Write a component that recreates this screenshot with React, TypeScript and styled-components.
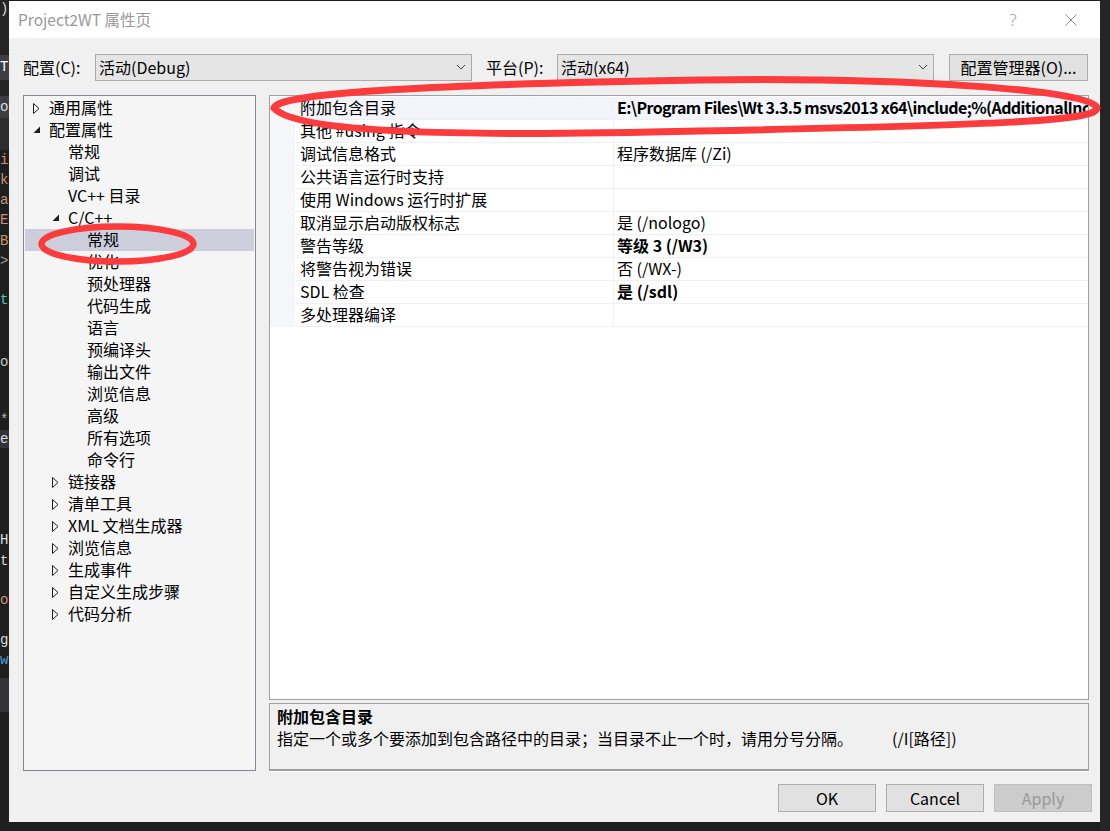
import React from "react";
import styled, { createGlobalStyle } from "styled-components";

const GlobalStyle = createGlobalStyle`
  html, body { margin: 0; padding: 0; background: #1e1e1e; }
  body {
    font-family: "Noto Sans CJK SC", "Noto Sans", sans-serif;
    font-size: 16px;
    color: #000;
  }
  #root { width: 1110px; height: 831px; overflow: hidden; }
  * { box-sizing: border-box; }
`;

const Desktop = styled.div`
  position: relative;
  width: 1110px;
  height: 831px;
  display: flex;
  align-items: flex-start;
  background: #1e1e1e;
  overflow: hidden;
`;

const EditorStrip = styled.div<{ $w: number; $bg: string }>`
  width: ${(p) => p.$w}px;
  height: 831px;
  flex: none;
  display: flex;
  flex-direction: column;
  background: ${(p) => p.$bg};
`;

const EditorLine = styled.div<{ $h: number; $color: string; $bg: string }>`
  height: ${(p) => p.$h}px;
  line-height: ${(p) => p.$h}px;
  flex: none;
  color: ${(p) => p.$color};
  background: ${(p) => p.$bg};
  font-family: "Liberation Mono", "DejaVu Sans Mono", monospace;
  font-size: 14px;
  white-space: nowrap;
`;

const Dialog = styled.div`
  width: 1091px;
  height: 821px;
  margin-top: 1px;
  flex: none;
  display: flex;
  flex-direction: column;
  background: #f0f0f0;
`;

const TitleBar = styled.div`
  height: 37px;
  flex: none;
  background: #fff;
  display: flex;
  align-items: center;
  padding-left: 9px;
`;

const TitleText = styled.div`
  flex: 1;
  color: #999;
  font-size: 15.5px;
  line-height: 20px;
  padding-bottom: 1px;
`;

const CaptionButton = styled.div<{ $mr: number }>`
  width: 46px;
  height: 30px;
  margin-right: ${(p) => p.$mr}px;
  display: flex;
  align-items: center;
  justify-content: center;
  color: #9a9a9a;
  font-size: 17px;
  font-family: "Noto Sans", sans-serif;
  font-weight: 300;
`;

const Body = styled.div`
  flex: 1;
  display: flex;
  flex-direction: column;
  padding: 16px 8px 10px 14px;
`;

const Toolbar = styled.div`
  height: 27px;
  margin-right: 3px;
  display: flex;
  align-items: center;
  flex: none;
`;

const FieldLabel = styled.div<{ $w: number; $ml: number }>`
  width: ${(p) => p.$w}px;
  margin-left: ${(p) => p.$ml}px;
  flex: none;
  white-space: nowrap;
  line-height: 26px;
  padding-bottom: 1px;
`;

const Select = styled.div`
  width: 377px;
  height: 27px;
  flex: none;
  display: flex;
  align-items: center;
  justify-content: space-between;
  padding: 0 5px 1px 3px;
  background: #e5e5e5;
  border: 1px solid #acacac;
  white-space: nowrap;
`;

const Button = styled.div<{ $w: number; $disabled?: boolean }>`
  width: ${(p) => p.$w}px;
  height: ${(p) => (p.$w > 120 ? 27 : 28)}px;
  flex: none;
  display: flex;
  align-items: center;
  justify-content: center;
  padding-bottom: 1px;
  background: ${(p) => (p.$disabled ? "#cccccc" : "#e1e1e1")};
  border: 1px solid ${(p) => (p.$disabled ? "#bfbfbf" : "#adadad")};
  color: ${(p) => (p.$disabled ? "#9a9a9a" : "#000")};
  white-space: nowrap;
`;

const ToolbarSpacer = styled.div`
  width: 15px;
  flex: none;
`;

const Main = styled.div`
  margin-top: 14px;
  margin-right: 3px;
  display: flex;
  gap: 13px;
  height: 676px;
  flex: none;
`;

const Tree = styled.div`
  width: 233px;
  height: 676px;
  flex: none;
  background: #f5f5f5;
  border: 1px solid #828790;
  padding: 1px 1px;
`;

const TreeRow = styled.div<{ $level: number; $selected?: boolean }>`
  height: 22px;
  display: flex;
  align-items: center;
  padding-left: ${(p) => 5 + p.$level * 19}px;
  padding-bottom: 1px;
  background: ${(p) => (p.$selected ? "#cccedb" : "transparent")};
  white-space: nowrap;
  line-height: 21px;
`;

const Expander = styled.div`
  width: 19px;
  height: 21px;
  flex: none;
  display: flex;
  align-items: center;
  padding-left: 3px;
  margin-top: 1px;
`;

const RightColumn = styled.div`
  width: 820px;
  flex: none;
  display: flex;
  flex-direction: column;
  gap: 3px;
`;

const Grid = styled.div`
  height: 605px;
  flex: none;
  background: #fff;
  border: 1px solid #a0a0a0;
  padding-top: 1px;
`;

const PropRow = styled.div`
  height: 23px;
  display: flex;
`;

const Gutter = styled.div`
  width: 25px;
  flex: none;
  background: #f5f6f9;
`;

const NameCell = styled.div<{ $selected?: boolean }>`
  width: 319px;
  flex: none;
  padding-left: 5px;
  padding-bottom: 1px;
  line-height: 21px;
  border-bottom: 1px solid #eef0f4;
  border-right: 1px solid #eef0f4;
  background: ${(p) => (p.$selected ? "#f3f5fa" : "#fff")};
  white-space: nowrap;
`;

const ValueCell = styled.div<{ $bold?: boolean; $selected?: boolean; $tight?: boolean }>`
  flex: 1;
  min-width: 0;
  padding-left: 3px;
  padding-bottom: 1px;
  line-height: 21px;
  border-bottom: 1px solid #eef0f4;
  background: ${(p) => (p.$selected ? "#f3f5fa" : "#fff")};
  font-weight: ${(p) => (p.$bold ? 700 : 400)};
  letter-spacing: ${(p) => (p.$tight ? "-0.6px" : "0")};
  white-space: nowrap;
  ${(p) => (p.$tight ? "overflow-x: clip; overflow-y: visible;" : "")}
`;

const Description = styled.div`
  height: 68px;
  flex: none;
  background: #f0f0f0;
  border: 1px solid #a0a0a0;
  border-bottom-width: 2px;
  box-shadow: 0 1px 0 #ffffff;
  padding: 2px 7px 0;
`;

const DescTitle = styled.div`
  font-weight: 700;
  line-height: 21px;
  padding-bottom: 1px;
`;

const DescText = styled.div`
  line-height: 21px;
  white-space: nowrap;
  display: flex;
`;

const DescSwitch = styled.span`
  margin-left: 39px;
`;

const Footer = styled.div`
  margin-top: 13px;
  height: 28px;
  display: flex;
  justify-content: flex-end;
  gap: 10px;
  flex: none;
`;

const Overlay = styled.svg`
  position: absolute;
  left: 0;
  top: 0;
  width: 1110px;
  height: 831px;
  pointer-events: none;
`;

const Collapsed = () => (
  <svg width="8" height="11" viewBox="0 0 8 11">
    <polygon points="0.5,0.5 0.5,10.5 6,5.5" fill="none" stroke="#1e1e1e" strokeWidth="1" />
  </svg>
);

const Expanded = () => (
  <svg width="8" height="8" viewBox="0 0 8 8">
    <polygon points="7,0.5 7,7 0.5,7" fill="#1e1e1e" />
  </svg>
);

const Chevron = () => (
  <svg width="10" height="6" viewBox="0 0 10 6">
    <polyline points="1,1 5,5 9,1" fill="none" stroke="#444" strokeWidth="1" />
  </svg>
);

type TreeItem = { label: string; level: number; state?: "open" | "closed"; selected?: boolean };

const treeItems: TreeItem[] = [
  { label: "通用属性", level: 0, state: "closed" },
  { label: "配置属性", level: 0, state: "open" },
  { label: "常规", level: 1 },
  { label: "调试", level: 1 },
  { label: "VC++ 目录", level: 1 },
  { label: "C/C++", level: 1, state: "open" },
  { label: "常规", level: 2, selected: true },
  { label: "优化", level: 2 },
  { label: "预处理器", level: 2 },
  { label: "代码生成", level: 2 },
  { label: "语言", level: 2 },
  { label: "预编译头", level: 2 },
  { label: "输出文件", level: 2 },
  { label: "浏览信息", level: 2 },
  { label: "高级", level: 2 },
  { label: "所有选项", level: 2 },
  { label: "命令行", level: 2 },
  { label: "链接器", level: 1, state: "closed" },
  { label: "清单工具", level: 1, state: "closed" },
  { label: "XML 文档生成器", level: 1, state: "closed" },
  { label: "浏览信息", level: 1, state: "closed" },
  { label: "生成事件", level: 1, state: "closed" },
  { label: "自定义生成步骤", level: 1, state: "closed" },
  { label: "代码分析", level: 1, state: "closed" },
];

type Prop = { name: string; value?: string; bold?: boolean; selected?: boolean; tight?: boolean };

const props: Prop[] = [
  {
    name: "附加包含目录",
    value: "E:\\Program Files\\Wt 3.3.5 msvs2013 x64\\include;%(AdditionalIncludeDirectories)",
    bold: true,
    selected: true,
    tight: true,
  },
  { name: "其他 #using 指令" },
  { name: "调试信息格式", value: "程序数据库 (/Zi)" },
  { name: "公共语言运行时支持" },
  { name: "使用 Windows 运行时扩展" },
  { name: "取消显示启动版权标志", value: "是 (/nologo)" },
  { name: "警告等级", value: "等级 3 (/W3)", bold: true },
  { name: "将警告视为错误", value: "否 (/WX-)" },
  { name: "SDL 检查", value: "是 (/sdl)", bold: true },
  { name: "多处理器编译" },
];

type Frag = { h: number; ch?: string; color?: string; bg?: string };

const leftFrags: Frag[] = [
  { h: 18, ch: ")", color: "#d4d4d4", bg: "#252526" },
  { h: 37, bg: "#252526" },
  { h: 25, ch: "T", color: "#ffffff", bg: "#3e3e42" },
  { h: 16, bg: "#252526" },
  { h: 22, ch: "o", color: "#dcdcdc", bg: "#3e3e42" },
  { h: 32, bg: "#2d2d30" },
  { h: 20, ch: "i", color: "#ce9178" },
  { h: 20, ch: "k", color: "#ce9178" },
  { h: 20, ch: "a", color: "#ce9178" },
  { h: 21, ch: "E", color: "#ce9178" },
  { h: 20, ch: "B", color: "#ce9178" },
  { h: 21, ch: ">", color: "#9b9b9b" },
  { h: 18 },
  { h: 20, ch: "t", color: "#4ec9b0" },
  { h: 42 },
  { h: 20, ch: "o", color: "#c8c8c8" },
  { h: 38 },
  { h: 20, ch: "*", color: "#b4b4b4" },
  { h: 18, ch: "e", color: "#dcdcdc", bg: "#333337" },
  { h: 82 },
  { h: 20, ch: "H", color: "#dcdcdc" },
  { h: 22, ch: "t", color: "#dcdcdc" },
  { h: 18 },
  { h: 20, ch: "o", color: "#ce9178" },
  { h: 20 },
  { h: 20, ch: "g", color: "#dcdcdc" },
  { h: 20, ch: "w", color: "#569cd6" },
  { h: 8 },
  { h: 34, bg: "#333337" },
  { h: 119 },
];

export default function App() {
  return (
    <>
      <GlobalStyle />
      <Desktop>
        <EditorStrip $w={9} $bg="#1e1e1e">
          {leftFrags.map((f, i) => (
            <EditorLine key={i} $h={f.h} $color={f.color ?? "#dcdcdc"} $bg={f.bg ?? "transparent"}>
              {f.ch ?? ""}
            </EditorLine>
          ))}
        </EditorStrip>

        <Dialog>
          <TitleBar>
            <TitleText>Project2WT 属性页</TitleText>
            <CaptionButton $mr={12}>?</CaptionButton>
            <CaptionButton $mr={6}>
              <svg width="12" height="12" viewBox="0 0 12 12">
                <path d="M0.5 0.5 L11.5 11.5 M11.5 0.5 L0.5 11.5" stroke="#8a8a8a" strokeWidth="1" fill="none" />
              </svg>
            </CaptionButton>
          </TitleBar>

          <Body>
            <Toolbar>
              <FieldLabel $w={72} $ml={0}>配置(C):</FieldLabel>
              <Select>
                <span>活动(Debug)</span>
                <Chevron />
              </Select>
              <FieldLabel $w={71} $ml={14}>平台(P):</FieldLabel>
              <Select>
                <span>活动(x64)</span>
                <Chevron />
              </Select>
              <ToolbarSpacer />
              <Button $w={139}>配置管理器(O)...</Button>
            </Toolbar>

            <Main>
              <Tree>
                {treeItems.map((t, i) => (
                  <TreeRow key={i} $level={t.level} $selected={t.selected}>
                    <Expander>
                      {t.state === "closed" ? <Collapsed /> : t.state === "open" ? <Expanded /> : null}
                    </Expander>
                    {t.label}
                  </TreeRow>
                ))}
              </Tree>

              <RightColumn>
                <Grid>
                  {props.map((p, i) => (
                    <PropRow key={i}>
                      <Gutter />
                      <NameCell $selected={p.selected}>{p.name}</NameCell>
                      <ValueCell $bold={p.bold} $selected={p.selected} $tight={p.tight}>
                        {p.value ?? ""}
                      </ValueCell>
                    </PropRow>
                  ))}
                </Grid>
                <Description>
                  <DescTitle>附加包含目录</DescTitle>
                  <DescText>
                    <span>指定一个或多个要添加到包含路径中的目录；当目录不止一个时，请用分号分隔。</span>
                    <DescSwitch>(/I[路径])</DescSwitch>
                  </DescText>
                </Description>
              </RightColumn>
            </Main>

            <Footer>
              <Button $w={98}>OK</Button>
              <Button $w={98}>Cancel</Button>
              <Button $w={98} $disabled>
                Apply
              </Button>
            </Footer>
          </Body>
        </Dialog>

        <EditorStrip $w={10} $bg="#252526" />

        <Overlay viewBox="0 0 1110 831">
          <path
            d="M 274 108 C 277 92, 450 84, 700 80 C 900 77, 1097 90, 1097 108 C 1097 121, 1000 125, 700 131 C 450 137, 296 133, 274 108 Z"
            fill="none"
            stroke="#fc3b3d"
            strokeWidth="7"
          />
          <ellipse cx="117.5" cy="244" rx="76" ry="17.5" fill="none" stroke="#fc3b3d" strokeWidth="6.5" />
        </Overlay>
      </Desktop>
    </>
  );
}
